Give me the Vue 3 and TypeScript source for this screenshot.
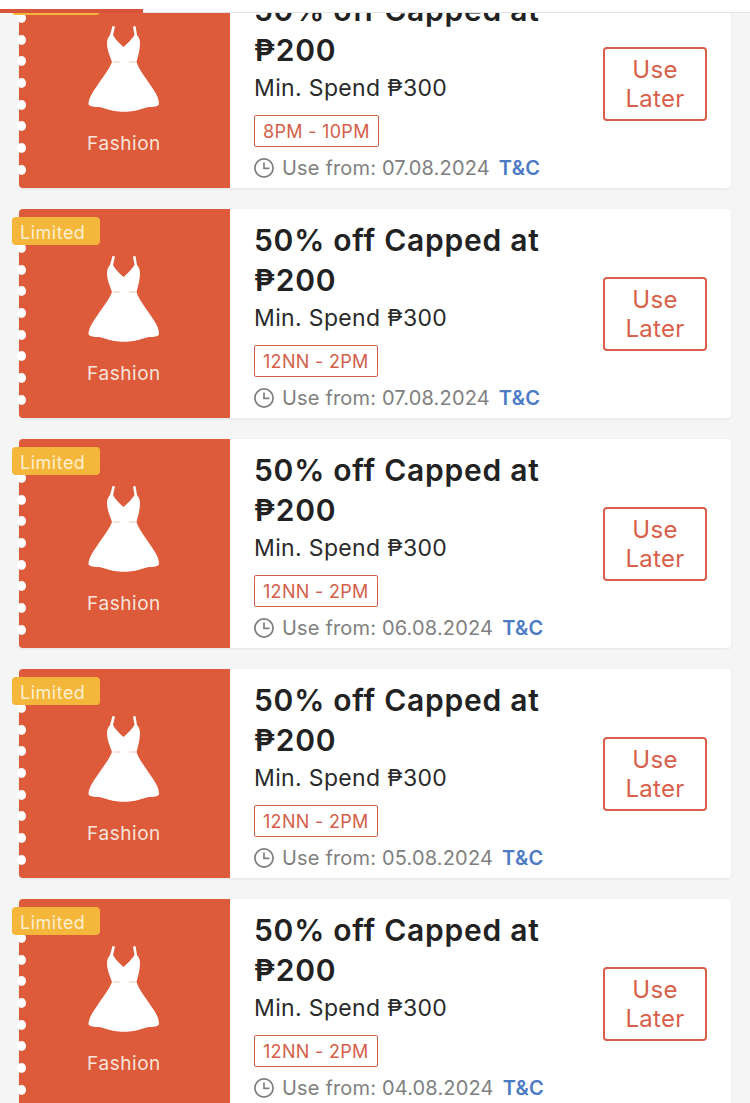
<script setup lang="ts">
interface Voucher {
  id: number
  time: string
  date: string
}

const vouchers: Voucher[] = [
  { id: 1, time: '8PM - 10PM', date: '07.08.2024' },
  { id: 2, time: '12NN - 2PM', date: '07.08.2024' },
  { id: 3, time: '12NN - 2PM', date: '06.08.2024' },
  { id: 4, time: '12NN - 2PM', date: '05.08.2024' },
  { id: 5, time: '12NN - 2PM', date: '04.08.2024' },
]

const notches: number[] = [1, 2, 3, 4, 5, 6, 7, 8]
</script>

<template>
  <div class="page">
    <div class="topbar"><div class="tab"></div></div>
    <div class="list">
      <article v-for="v in vouchers" :key="v.id" class="card">
        <div class="side">
          <div class="notches">
            <span v-for="n in notches" :key="n" class="notch"></span>
          </div>
          <svg class="dress" width="72" height="86" viewBox="0 0 72 86" aria-hidden="true">
            <path
              fill="#fff"
              d="M24.5 0 L27 0.5 L25 9 C27 13 31 17 35.5 21 C40 17 44 13 46.5 9 L45 0.5 L47.5 0 L49 9 C50.5 11 52 13 52 17 C52 24 50 30 48.5 36 C51 44 58 52 63 60 C68 67 71 72 71 78 C71 80 67 81 63 81 C58 81 56 82.5 52 83.5 C48 84.5 44 85.8 36 85.8 C28 85.8 24 84.5 20 83.5 C16 82.5 14 81 9 81 C5 81 0.5 80 0.5 78 C0.5 73 4 67 9 60 C14 52 21 44 24 36 C22 30 19 24 19 17 C19 13 20.5 11 22 9 Z"
            />
            <path d="M25 36 H32 M41 36 H48" fill="none" stroke="#eeb6a8" stroke-width="0.8" />
          </svg>
          <div class="cat">Fashion</div>
        </div>
        <div class="badge">Limited</div>
        <div class="body">
          <div class="info">
            <h3 class="title">50% off Capped at ₱200</h3>
            <p class="min">Min. Spend ₱300</p>
            <span class="tag">{{ v.time }}</span>
            <div class="use">
              <svg class="clock" width="20" height="20" viewBox="0 0 20 20" aria-hidden="true">
                <circle cx="10" cy="10" r="9.1" fill="none" stroke="#7f7f7f" stroke-width="1.7" />
                <path d="M10 4.4 V10.4 H15.4" fill="none" stroke="#7f7f7f" stroke-width="1.7" />
              </svg>
              <span class="from">Use from: {{ v.date }}</span>
              <span class="tc">T&amp;C</span>
            </div>
          </div>
          <button class="later" type="button">Use Later</button>
        </div>
      </article>
    </div>
  </div>
</template>

<style>
html,
body {
  margin: 0;
  background: #f5f5f5;
}
</style>

<style scoped>
.page {
  position: relative;
  width: 750px;
  height: 1103px;
  overflow: hidden;
  background: #f5f5f5;
  font-family: Inter, 'Noto Sans', sans-serif;
}
.topbar {
  position: absolute;
  z-index: 5;
  top: 0;
  left: 0;
  right: 0;
  height: 12px;
  background: #fff;
  border-bottom: 1px solid #e4e4e4;
}
.tab {
  position: absolute;
  left: 0;
  top: 9px;
  width: 143px;
  height: 4px;
  background: #d9553a;
}
.list {
  display: flex;
  flex-direction: column;
  gap: 21px;
  margin-top: -21px;
  padding: 0 19px;
}
.card {
  position: relative;
  display: flex;
  width: 712px;
  height: 209px;
  flex: none;
  box-shadow: 0 1px 3px rgba(0, 0, 0, 0.07);
  border-radius: 4px;
}
.side {
  position: relative;
  flex: none;
  width: 211px;
  box-sizing: border-box;
  padding-top: 47px;
  display: flex;
  flex-direction: column;
  align-items: center;
  background: #dd5a3a;
  border-radius: 4px 0 0 4px;
}
.dress {
  display: block;
  margin-right: 1px;
}
.cat {
  margin-top: 19px;
  margin-right: 1px;
  font-size: 19px;
  line-height: 26px;
  letter-spacing: 0.55px;
  color: #fbe4da;
}
.notches {
  position: absolute;
  left: -2px;
  top: 34px;
  display: flex;
  flex-direction: column;
  gap: 11.7px;
}
.notch {
  display: block;
  width: 9px;
  height: 10px;
  border-radius: 50%;
  background: #fff;
}
.badge {
  position: absolute;
  left: -7px;
  top: 8px;
  width: 88px;
  height: 28px;
  box-sizing: border-box;
  padding-left: 8px;
  border-radius: 4px;
  background: #f4b63b;
  color: #fff0cf;
  font-size: 18px;
  line-height: 31px;
  letter-spacing: 0.5px;
}
.body {
  flex: 1;
  display: flex;
  background: #fff;
  border-radius: 0 4px 4px 0;
  padding-left: 24px;
}
.info {
  width: 349px;
  flex: none;
  display: flex;
  flex-direction: column;
  align-items: flex-start;
  padding-top: 11px;
}
.title {
  margin: 0;
  font-size: 30px;
  line-height: 40px;
  font-weight: 600;
  letter-spacing: 0.75px;
  color: #222;
}
.min {
  margin: 4px 0 0;
  font-size: 23px;
  line-height: 28px;
  font-weight: 400;
  letter-spacing: 0.35px;
  color: #2a2a2a;
}
.tag {
  margin-top: 13px;
  box-sizing: border-box;
  height: 32px;
  padding: 0 8px;
  border: 1px solid #d4604a;
  border-radius: 2px;
  color: #d4604a;
  font-size: 18px;
  line-height: 32px;
  letter-spacing: 0.3px;
}
.use {
  margin-top: 7px;
  display: flex;
  align-items: center;
  gap: 8px;
  height: 28px;
  font-size: 20px;
  line-height: 28px;
}
.clock {
  flex: none;
}
.from {
  color: #808080;
  letter-spacing: 0.17px;
}
.tc {
  margin-left: 1px;
  color: #4d7cc4;
  font-weight: 600;
  letter-spacing: 0.3px;
}
.later {
  align-self: flex-start;
  margin-top: 68px;
  width: 104px;
  height: 74px;
  padding: 0 12px;
  box-sizing: border-box;
  border: 2px solid #d8604a;
  border-radius: 4px;
  background: #fff;
  color: #d8604a;
  font-family: inherit;
  font-size: 24px;
  line-height: 29px;
  letter-spacing: 0.3px;
  text-align: center;
}
</style>
